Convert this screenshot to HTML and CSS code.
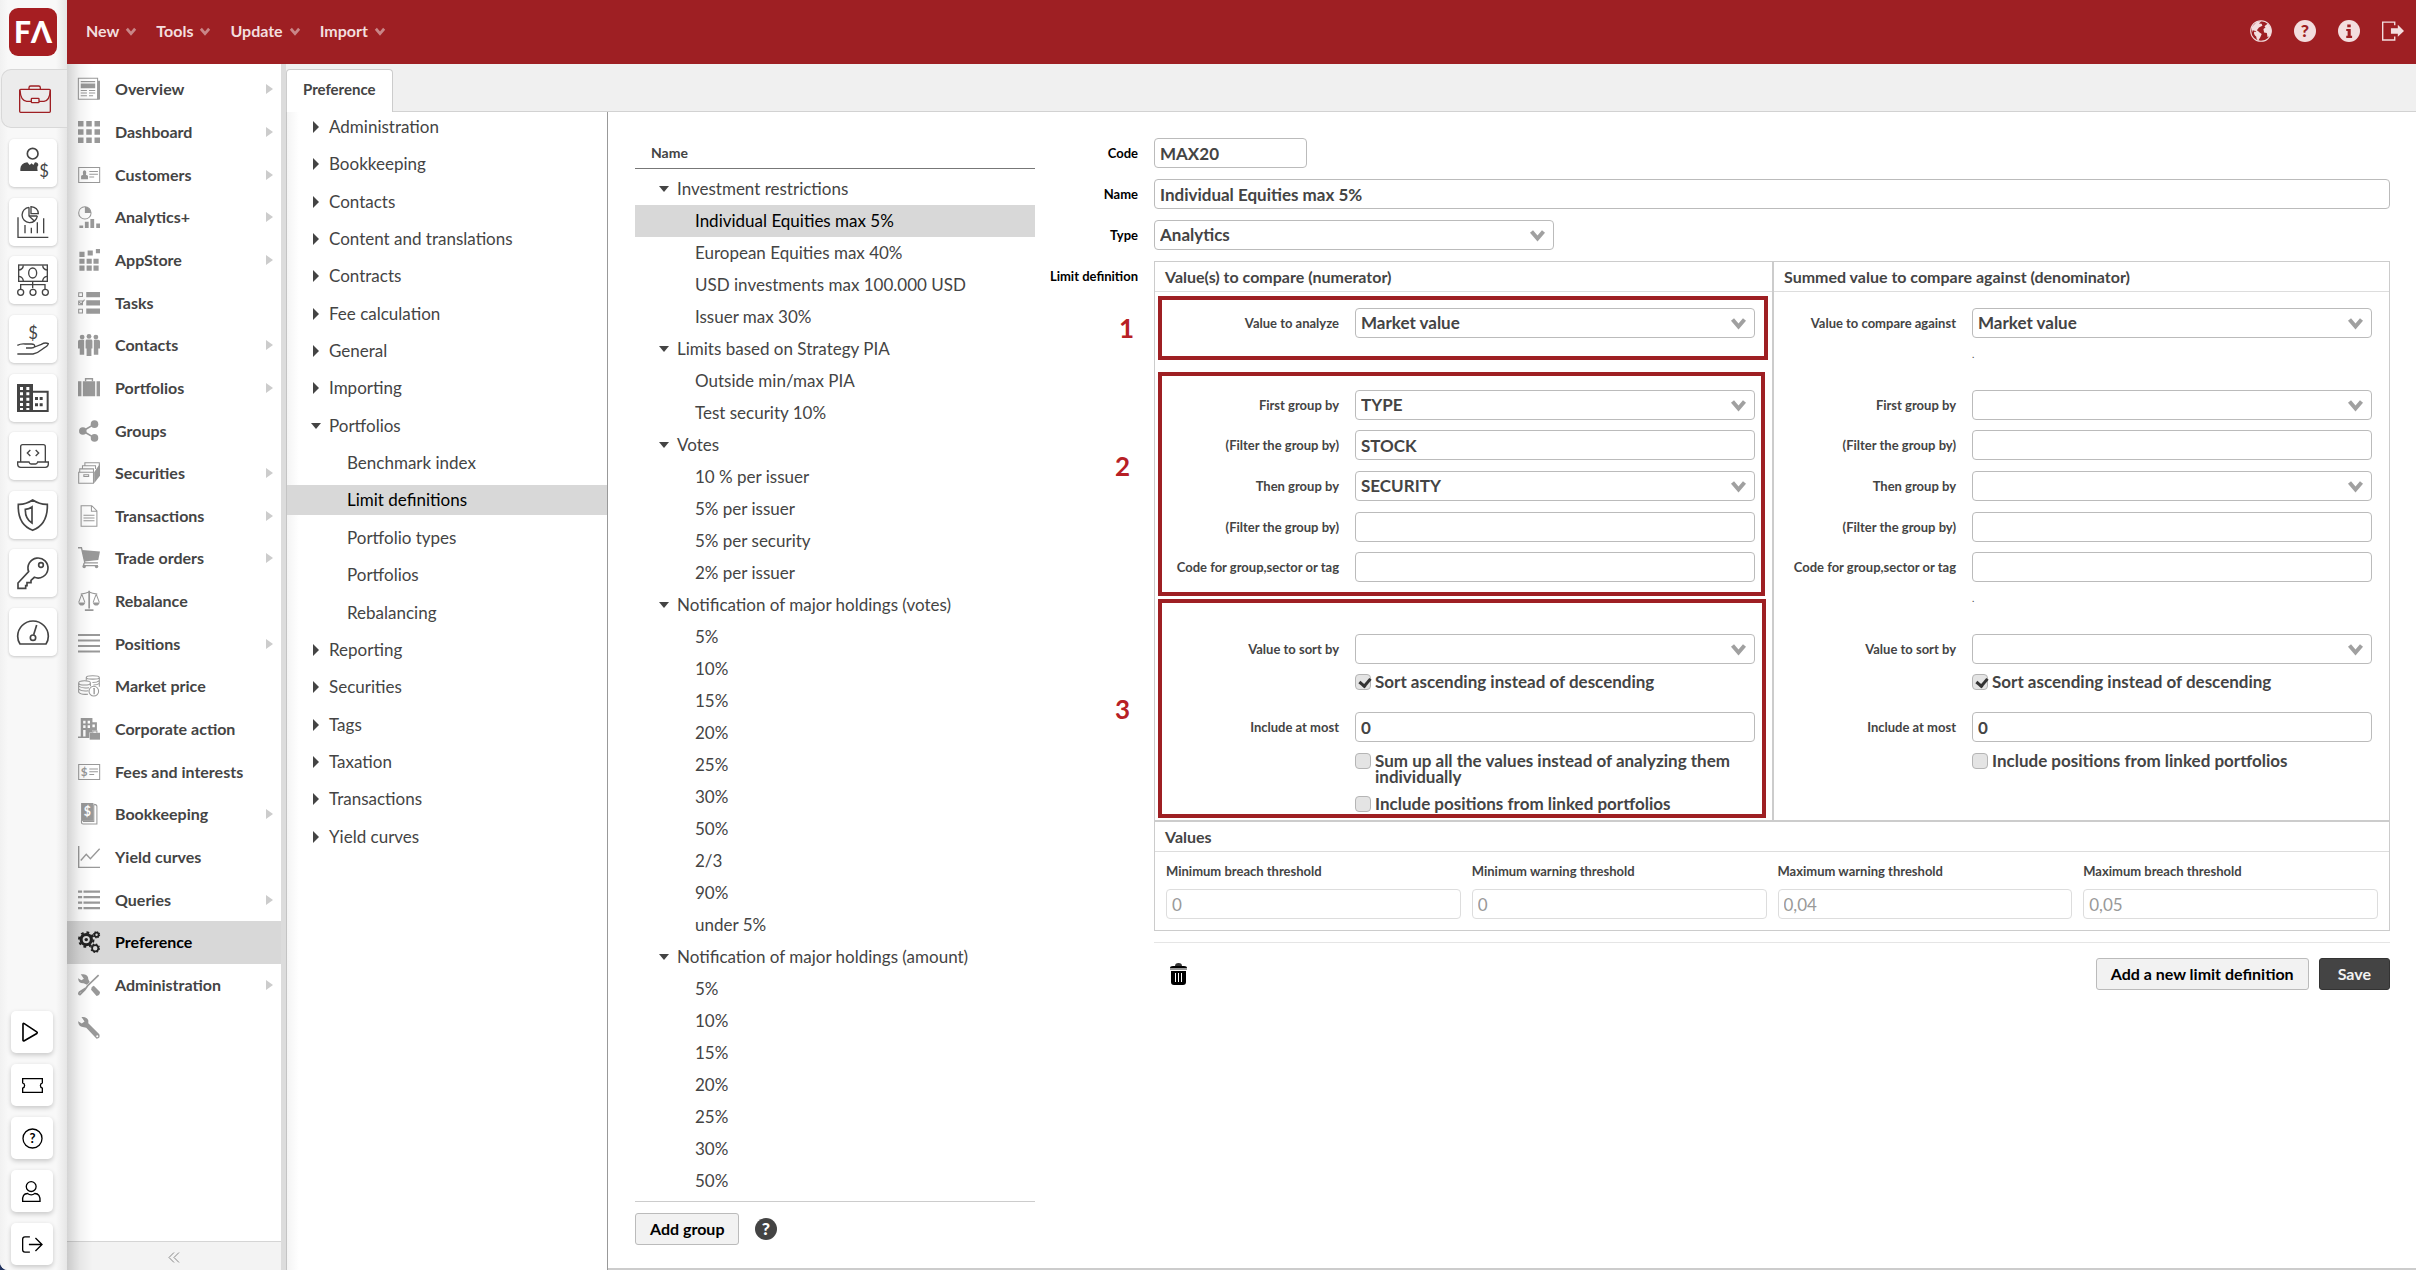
FILE: index.html
```html
<!DOCTYPE html>
<html lang="en">
<head>
<meta charset="utf-8">
<title>Preference - Limit definitions</title>
<link rel="stylesheet" href="styles.css">
</head>
<body>
<svg class="sprite" aria-hidden="true">
  <symbol id="chevron" viewBox="0 0 16 13"><path d="M2 2.500L8 9.500 14 2.500" fill="none" stroke="currentColor" stroke-width="4"/></symbol>
  <symbol id="question" viewBox="0 0 64 64"><circle cx="32" cy="32" r="32" fill="currentColor"/><text class="q-mark" x="32" y="50" text-anchor="middle">?</text></symbol>
</svg>
<div class="app">
  <aside class="rail">
    <a class="logo" href="#" aria-label="Home"><svg viewBox="0 0 48 48"><text x="24" y="35" text-anchor="middle" class="logo-text">FΛ</text></svg></a>
    <a class="rail-current" href="#" aria-label="Back office"><svg viewBox="0 0 96 96"><g fill="none" stroke="#9e1f23" stroke-width="4"><rect x="2" y="19" width="92" height="69" rx="3"/><path d="M30 18v-4q0-5 5-5h24q5 0 5 5v4M3 22q2 32 20 33h15M60 55h15q17-2 19-33"/><rect x="37" y="46" width="23" height="13" rx="2"/></g></svg></a>
    <nav class="rail-apps" aria-label="Applications">
      <a href="#" aria-label="Customers"><svg viewBox="0 0 96 96"><circle cx="47" cy="20" r="16" fill="none" stroke="#444" stroke-width="5"/><path d="M10 72v-6q0-17 21-20l7 8 6-5 5 5 5-8q10 0 10 9-5 4-2 17z" fill="#444"/><text class="dollar-lg" x="81" y="90" text-anchor="middle">$</text></svg></a>
      <a href="#" aria-label="Analytics"><svg viewBox="0 0 96 96"><g fill="none" stroke="#444" stroke-width="4"><path d="M3 34v60h91M24 57v25M43 65v17M61 49v33M80 37v45"/><path d="M36 4a23 23 0 1 0 25 26M36 4v26l16 15"/><path d="M42 2v21h22q-1-19-22-21zM36 30h25"/></g></svg></a>
      <a href="#" aria-label="Payments"><svg viewBox="0 0 96 96"><g fill="none" stroke="#444" stroke-width="4"><rect x="5" y="3" width="86" height="49"/><ellipse cx="47" cy="27" rx="12" ry="15"/><path d="M6 18q12-2 13-14M77 4q1 12 13 14M6 37q12 2 13 14M77 51q1-12 13-14M47 53v20M11 75V62h73v13"/><circle cx="11" cy="85" r="9"/><circle cx="48" cy="85" r="9"/><circle cx="85" cy="85" r="9"/></g></svg></a>
      <a href="#" aria-label="Fees"><svg viewBox="0 0 96 96"><text class="dollar-lg" x="48" y="48" text-anchor="middle">$</text><path d="M1 67q12-6 24-4h18q12 0 10 8-2 4-10 4H27M53 72l20-8q12-7 21-2-1 7-16 15-16 13-30 16H1" fill="none" stroke="#444" stroke-width="4"/></svg></a>
      <a href="#" aria-label="Companies"><svg viewBox="0 0 96 96"><path d="M0 6h48v84H0z" fill="#444"/><path d="M48 29h44v58H48" fill="none" stroke="#444" stroke-width="6"/><path d="M9 15h9v9H9zM28 15h9v9h-9zM9 31h9v9H9zM28 31h9v9h-9zM9 47h9v9H9zM28 47h9v9h-9zM9 63h9v9H9zM28 63h9v9h-9zM9 78h9v6H9zM28 78h9v6h-9z" fill="#fff"/><path d="M54 45h9v9h-9zM68 45h9v9h-9zM54 64h9v9h-9zM68 64h9v9h-9z" fill="#444"/></svg></a>
      <a href="#" aria-label="Developer"><svg viewBox="0 0 96 96"><g fill="none" stroke="#444" stroke-width="4"><path d="M11 64V20q0-6 6-6h62q6 0 6 6v44M2 66h34q2 6 6 6h14q4 0 6-6h32v7q0 9-9 9H11q-9 0-9-9z"/><path d="M40 30l-9 9 9 9M56 30l9 9-9 9"/></g></svg></a>
      <a href="#" aria-label="Compliance"><svg viewBox="0 0 96 96"><g fill="none" stroke="#444" stroke-width="5"><path d="M47 3q22 14 44 13 2 60-44 78Q1 76 4 16q22 1 43-13z"/><path d="M45 24q-8 6-20 7-1 28 20 41z"/></g></svg></a>
      <a href="#" aria-label="Access"><svg viewBox="0 0 96 96"><g fill="none" stroke="#444" stroke-width="5"><path d="M35 44A30 30 0 1 1 52 61l-10 9v7H30v9h-4v8H3V78z"/><circle cx="72" cy="24" r="7"/></g></svg></a>
      <a href="#" aria-label="Monitoring"><svg viewBox="0 0 96 96"><g fill="none" stroke="#444" stroke-width="5"><path d="M9 84Q2 74 2 61a45 45 0 0 1 92 0q0 13-7 23z"/><path d="M50 56l9-29"/><circle cx="48" cy="65" r="8"/></g></svg></a>
    </nav>
    <div class="rail-tools">
      <a href="#" aria-label="Run"><svg viewBox="0 0 64 64"><path d="M3 7v48q0 4 4 2l38-22q3-3 0-5L7 5Q3 3 3 7z" fill="none" stroke="#000" stroke-width="5"/></svg></a>
      <a href="#" aria-label="Tickets"><svg viewBox="0 0 64 64"><path d="M2 11h60v13q-6 2-6 8t6 8v13H2V40q6-2 6-8t-6-8z" fill="none" stroke="#000" stroke-width="4"/></svg></a>
      <a href="#" aria-label="Help"><svg viewBox="0 0 64 64"><circle cx="32" cy="32" r="29" fill="none" stroke="#000" stroke-width="4"/><text class="q-line" x="32" y="46" text-anchor="middle">?</text></svg></a>
      <a href="#" aria-label="Profile"><svg viewBox="0 0 64 64"><g fill="none" stroke="#000" stroke-width="4"><circle cx="28" cy="17" r="15"/><path d="M2 62Q0 38 17 38q5 4 11 4t11-4q17 0 16 24z"/></g></svg></a>
      <a href="#" aria-label="Sign out"><svg viewBox="0 0 64 64"><path d="M24 9H9q-7 0-7 7v32q0 7 7 7h15M21 32h39M41 12l20 20-20 20" fill="none" stroke="#000" stroke-width="4"/></svg></a>
    </div>
  </aside>
  <div class="workspace">
    <header class="topbar">
      <div class="menus">
        <button type="button">New<svg><use href="#chevron"/></svg></button>
        <button type="button">Tools<svg><use href="#chevron"/></svg></button>
        <button type="button">Update<svg><use href="#chevron"/></svg></button>
        <button type="button">Import<svg><use href="#chevron"/></svg></button>
      </div>
      <div class="top-icons">
        <a href="#" aria-label="Language"><svg viewBox="0 0 64 64"><circle cx="32" cy="32" r="30" fill="none" stroke="currentColor" stroke-width="3"/><path d="M5 20L20 5l14-2-8 7 8 1 2 6-10 5-6 8 6 4-4 3-6-5-8-2-2 6zM12 34l14 1 8 6-4 9-6 10q-6-4-6-12-8-6-6-14zM42 18l10-8 8 12 3 10-4 14-8 4-2-12-8-2-2-10 6-4z" fill="currentColor"/></svg></a>
        <a href="#" aria-label="Help"><svg viewBox="0 0 64 64"><use href="#question"/></svg></a>
        <a href="#" aria-label="Information"><svg viewBox="0 0 64 64"><circle cx="32" cy="32" r="32" fill="currentColor"/><path d="M27 13h10v8H27zM24 26h13v20h4v6H24v-6h4V32h-4z" fill="#9e1f23"/></svg></a>
        <a href="#" aria-label="Sign out"><svg viewBox="0 0 64 64"><path d="M37 15V6H2v52h35V48" fill="none" stroke="currentColor" stroke-width="4"/><path d="M26 24h20V14l18 18-18 17V40H26z" fill="currentColor"/></svg></a>
      </div>
    </header>
    <div class="body">
      <div class="sidebar">
        <nav class="modules" aria-label="Modules">
          <a class="sub" href="#"><svg viewBox="0 0 64 64"><path d="M1 1h56v61H1z" fill="none" stroke="currentColor" stroke-width="3"/><path d="M57 8h7v54q-4 3-8 0zM8 9h42v3H8zM8 16h42v14H8zM8 35h18v3H8zM32 35h18v3H32zM8 42h18v3H8zM32 42h18v3H32zM8 50h18v3H8zM32 50h12v3H32z" fill="currentColor"/></svg>Overview</a>
          <a class="sub" href="#"><svg viewBox="0 0 64 64"><path d="M0 0h16v16H0zM24 0h16v16H24zM48 0h16v16H48zM0 24h16v16H0zM24 24h16v16H24zM48 24h16v16H48zM0 48h16v16H0zM24 48h16v16H24zM48 48h16v16H48z" fill="currentColor"/></svg>Dashboard</a>
          <a class="sub" href="#"><svg viewBox="0 0 64 64"><path d="M2 10h61v44H2z" fill="none" stroke="currentColor" stroke-width="3"/><path d="M9 44V34l6-3q-3-12 4-13 7 1 4 13l6 3v10zM33 20h25v3H33zM33 28h25v3H33zM33 36h14v3H33z" fill="currentColor"/></svg>Customers</a>
          <a class="sub" href="#"><svg viewBox="0 0 64 64"><circle cx="20" cy="20" r="18" fill="none" stroke="currentColor" stroke-width="3"/><path d="M20 20V2a18 18 0 0 1 18 18zM4 57h11v7H4zM20 46h11v18H20zM36 38h11v26H36zM53 51h11v13H53z" fill="currentColor"/></svg>Analytics+</a>
          <a class="sub" href="#"><svg viewBox="0 0 64 64"><path d="M4 8h15v15H4zM28 4h15v15H28zM52 0h12v12H52zM4 28h15v15H4zM25 28h15v15H25zM45 28h15v15H45zM4 48h15v15H4zM25 48h15v15H25zM45 48h15v15H45z" fill="currentColor"/></svg>AppStore</a>
          <a href="#"><svg viewBox="0 0 64 64"><path d="M24 0h40v15H24zM24 24h40v15H24zM24 48h40v15H24z" fill="currentColor"/><path d="M2 2h11v11H2zM2 26h11v11H2zM2 50h11v11H2zM4 29l5 6L19 22" fill="none" stroke="currentColor" stroke-width="3"/></svg>Tasks</a>
          <a class="sub" href="#"><svg viewBox="0 0 64 64"><g fill="currentColor"><circle cx="12" cy="9" r="7"/><circle cx="32" cy="7" r="7"/><circle cx="52" cy="9" r="7"/><path d="M0 22q0-5 5-5h13v43H5V42H0zM22 20q0-4 4-4h12q4 0 4 4v22h-3v22H25V42h-3zM46 17h13q5 0 5 5v20h-5v18H46z"/></g></svg>Contacts</a>
          <a class="sub" href="#"><svg viewBox="0 0 64 64"><path d="M0 12h10v44H0zM14 12h36v44H14zM54 12h10v44H54z" fill="currentColor"/><path d="M22 12V5h20v7" fill="none" stroke="currentColor" stroke-width="4"/></svg>Portfolios</a>
          <a href="#"><svg viewBox="0 0 64 64"><g fill="currentColor"><circle cx="14" cy="32" r="11"/><circle cx="48" cy="12" r="11"/><circle cx="48" cy="52" r="11"/></g><path d="M48 12L14 32l34 20" fill="none" stroke="currentColor" stroke-width="5"/></svg>Groups</a>
          <a class="sub" href="#"><svg viewBox="0 0 64 64"><g fill="none" stroke="currentColor" stroke-width="3"><path d="M2 30h43v32H2zM5 29v-9h40v9M13 19v-8h38v9M20 10V2h42v8M17 37h14v5H17z"/></g><path d="M47 30L64 4v36L47 62z" fill="currentColor"/></svg>Securities</a>
          <a class="sub" href="#"><svg viewBox="0 0 64 64"><path d="M9 2h31l15 15v45H9zM39 2v16h16M16 30h32M16 38h32M16 46h32" fill="none" stroke="currentColor" stroke-width="3"/></svg>Transactions</a>
          <a class="sub" href="#"><svg viewBox="0 0 64 64"><path d="M0 2h10l10 44h38M18 46l-2 8h42" fill="none" stroke="currentColor" stroke-width="4"/><path d="M12 9l52 4-5 25-40 4z" fill="currentColor"/><circle cx="18" cy="57" r="5" fill="currentColor"/><circle cx="54" cy="57" r="5" fill="currentColor"/></svg>Trade orders</a>
          <a href="#"><svg viewBox="0 0 64 64"><path d="M30 2h5v52h-5zM20 56h25v5H20zM1 36h20q-2 9-10 9T1 36zM43 36h20q-2 9-10 9t-10-9z" fill="currentColor"/><path d="M8 12q14-2 24-6 10 4 24 6M11 12L2 36M11 12l9 24M53 12l-9 24M53 12l9 24" fill="none" stroke="currentColor" stroke-width="3"/></svg>Rebalance</a>
          <a class="sub" href="#"><svg viewBox="0 0 64 64"><path d="M0 3h64v6H0zM0 19h64v6H0zM0 35h64v6H0zM0 51h64v6H0z" fill="currentColor"/></svg>Positions</a>
          <a href="#"><svg viewBox="0 0 64 64"><g fill="none" stroke="currentColor" stroke-width="3"><ellipse cx="43" cy="7" rx="19" ry="5"/><path d="M24 8v8M62 8v26M42 22q14 0 20-6M45 29q12 0 17-5"/><ellipse cx="19" cy="23" rx="17" ry="6"/><path d="M2 24v26q6 8 27 6M2 32q8 8 30 5M2 41q10 8 28 5M36 24v9"/><circle cx="46" cy="47" r="14"/></g><path d="M44 38h5v18h-4V42z" fill="currentColor"/></svg>Market price</a>
          <a href="#"><svg viewBox="0 0 64 64"><path fill-rule="evenodd" d="M8 0h34v12h13v24H41v6h-8v16H0v-4h8zM15 8v8h7V8zM28 8v8h7V8zM15 21v8h7v-8zM28 21v8h7v-8zM42 19v8h7v-8zM15 35v19h7V35z" fill="currentColor"/><path d="M34 43h30v20H34z" fill="currentColor"/><path d="M43 43v-5h12v5" fill="none" stroke="currentColor" stroke-width="3"/></svg>Corporate action</a>
          <a href="#"><svg viewBox="0 0 64 64"><path d="M2 10h61v44H2zM33 23h25M33 31h25M33 39h14" fill="none" stroke="currentColor" stroke-width="3"/><text class="dollar-sm" x="18" y="44" text-anchor="middle">$</text></svg>Fees and interests</a>
          <a class="sub" href="#"><svg viewBox="0 0 64 64"><path d="M9 0h36v52H9z" fill="currentColor"/><path d="M10 50v6q0 5 5 5h40V10q0-6-8-6M46 4v50H14" fill="none" stroke="currentColor" stroke-width="3"/><text class="dollar-inv" x="27" y="37" text-anchor="middle">$</text></svg>Bookkeeping</a>
          <a href="#"><svg viewBox="0 0 64 64"><path d="M2 0v62h62M8 42l16-18 12 13L63 8" fill="none" stroke="currentColor" stroke-width="4"/></svg>Yield curves</a>
          <a class="sub" href="#"><svg viewBox="0 0 64 64"><path d="M0 4h12v7H0zM16 4h48v7H16zM0 20h12v7H0zM16 20h48v7H16zM0 36h12v7H0zM16 36h48v7H16zM0 52h12v7H0zM16 52h48v7H16z" fill="currentColor"/></svg>Queries</a>
          <a class="current" href="#" aria-current="page"><svg viewBox="0 0 64 64"><g fill="none" stroke="currentColor"><circle cx="24" cy="25" r="15" stroke-width="9"/><circle cx="24" cy="25" r="21" stroke-width="6" stroke-dasharray="8 8.500"/><circle cx="54" cy="11" r="6" stroke-width="5"/><circle cx="54" cy="11" r="9" stroke-width="3" stroke-dasharray="4 3"/><circle cx="50" cy="50" r="9" stroke-width="5"/><circle cx="50" cy="50" r="12" stroke-width="4" stroke-dasharray="4.500 5"/></g><circle cx="24" cy="25" r="5" fill="currentColor"/></svg>Preference</a>
          <a class="sub" href="#"><svg viewBox="0 0 64 64"><path d="M8 1h8q14 2 14 14l4 8-8 8-10-4Q2 28 0 12l10 6 7-4zM40 38l6-4 18 18q0 10-10 12L38 46z" fill="currentColor"/><path d="M60 3L28 34 20 46 6 60q-6-2-2-7l18-12" fill="none" stroke="currentColor" stroke-width="5"/></svg>Administration</a>
          <a href="#" aria-label="Tools"><svg viewBox="0 0 64 64"><path d="M10 0q16-2 20 10v8l32 32q4 12-8 13L24 31l-10-2Q2 28 0 12l11 7 8-6z" fill="currentColor"/><circle cx="56" cy="56" r="3" fill="#fff"/></svg></a>
        </nav>
        <button class="collapse" type="button" aria-label="Collapse menu"><svg viewBox="0 0 36 32"><path d="M18 1L3 16l15 15M33 1L18 16l15 15" fill="none" stroke="#888" stroke-width="3"/></svg></button>
      </div>
      <div class="content">
        <div class="tabs"><a class="tab" href="#">Preference</a></div>
        <div class="panes">
          <nav class="tree" aria-label="Preferences">
            <div class="tree-items">
              <a class="closed" href="#">Administration</a>
              <a class="closed" href="#">Bookkeeping</a>
              <a class="closed" href="#">Contacts</a>
              <a class="closed" href="#">Content and translations</a>
              <a class="closed" href="#">Contracts</a>
              <a class="closed" href="#">Fee calculation</a>
              <a class="closed" href="#">General</a>
              <a class="closed" href="#">Importing</a>
              <a class="open" href="#">Portfolios</a>
              <a class="leaf" href="#">Benchmark index</a>
              <a class="leaf current" href="#">Limit definitions</a>
              <a class="leaf" href="#">Portfolio types</a>
              <a class="leaf" href="#">Portfolios</a>
              <a class="leaf" href="#">Rebalancing</a>
              <a class="closed" href="#">Reporting</a>
              <a class="closed" href="#">Securities</a>
              <a class="closed" href="#">Tags</a>
              <a class="closed" href="#">Taxation</a>
              <a class="closed" href="#">Transactions</a>
              <a class="closed" href="#">Yield curves</a>
            </div>
          </nav>
          <main class="detail">
            <section class="limits">
              <table>
                <thead><tr><th>Name</th></tr></thead>
                <tbody>
                  <tr class="group"><td>Investment restrictions</td></tr>
                  <tr class="current"><td>Individual Equities max 5%</td></tr>
                  <tr><td>European Equities max 40%</td></tr>
                  <tr><td>USD investments max 100.000 USD</td></tr>
                  <tr><td>Issuer max 30%</td></tr>
                  <tr class="group"><td>Limits based on Strategy PIA</td></tr>
                  <tr><td>Outside min/max PIA</td></tr>
                  <tr><td>Test security 10%</td></tr>
                  <tr class="group"><td>Votes</td></tr>
                  <tr><td>10 % per issuer</td></tr>
                  <tr><td>5% per issuer</td></tr>
                  <tr><td>5% per security</td></tr>
                  <tr><td>2% per issuer</td></tr>
                  <tr class="group"><td>Notification of major holdings (votes)</td></tr>
                  <tr><td>5%</td></tr>
                  <tr><td>10%</td></tr>
                  <tr><td>15%</td></tr>
                  <tr><td>20%</td></tr>
                  <tr><td>25%</td></tr>
                  <tr><td>30%</td></tr>
                  <tr><td>50%</td></tr>
                  <tr><td>2/3</td></tr>
                  <tr><td>90%</td></tr>
                  <tr><td>under 5%</td></tr>
                  <tr class="group"><td>Notification of major holdings (amount)</td></tr>
                  <tr><td>5%</td></tr>
                  <tr><td>10%</td></tr>
                  <tr><td>15%</td></tr>
                  <tr><td>20%</td></tr>
                  <tr><td>25%</td></tr>
                  <tr><td>30%</td></tr>
                  <tr><td>50%</td></tr>
                </tbody>
              </table>
              <div class="list-actions">
                <button class="btn" type="button">Add group</button>
                <a class="list-help" href="#" aria-label="Help"><svg viewBox="0 0 64 64"><use href="#question"/></svg></a>
              </div>
            </section>
            <form class="editor">
              <label for="code">Code</label>
              <input class="field short" id="code" type="text" value="MAX20">
              <label for="name">Name</label>
              <input class="field" id="name" type="text" value="Individual Equities max 5%">
              <label for="type">Type</label>
              <span class="select medium"><select class="field" id="type"><option>Analytics</option></select><svg><use href="#chevron"/></svg></span>
              <span class="caption">Limit definition</span>
              <div class="definition">
                <div class="sides">
                  <section class="side">
                    <h2>Value(s) to compare (numerator)</h2>
                    <div class="rows">
                      <label for="n-value">Value to analyze</label><span class="select"><select class="field" id="n-value"><option>Market value</option></select><svg><use href="#chevron"/></svg></span>
                      <span></span><span class="dot">.</span>
                      <label for="n-first">First group by</label><span class="select"><select class="field" id="n-first"><option>TYPE</option></select><svg><use href="#chevron"/></svg></span>
                      <label for="n-filter1">(Filter the group by)</label><input class="field" id="n-filter1" type="text" value="STOCK">
                      <label for="n-then">Then group by</label><span class="select"><select class="field" id="n-then"><option>SECURITY</option></select><svg><use href="#chevron"/></svg></span>
                      <label for="n-filter2">(Filter the group by)</label><input class="field" id="n-filter2" type="text">
                      <label for="n-code">Code for group,sector or tag</label><input class="field" id="n-code" type="text">
                      <span></span><span class="dot">.</span>
                      <label for="n-sort">Value to sort by</label><span class="select"><select class="field" id="n-sort"><option></option></select><svg><use href="#chevron"/></svg></span>
                    </div>
                    <div class="limit-rows">
                      <label class="check"><input type="checkbox" checked>Sort ascending instead of descending</label>
                      <label for="n-most">Include at most</label><input class="field" id="n-most" type="text" value="0">
                      <label class="check"><input type="checkbox">Sum up all the values instead of analyzing them individually</label>
                      <label class="check"><input type="checkbox">Include positions from linked portfolios</label>
                    </div>
                  </section>
                  <section class="side">
                    <h2>Summed value to compare against (denominator)</h2>
                    <div class="rows">
                      <label for="d-value">Value to compare against</label><span class="select"><select class="field" id="d-value"><option>Market value</option></select><svg><use href="#chevron"/></svg></span>
                      <span></span><span class="dot">.</span>
                      <label for="d-first">First group by</label><span class="select"><select class="field" id="d-first"><option></option></select><svg><use href="#chevron"/></svg></span>
                      <label for="d-filter1">(Filter the group by)</label><input class="field" id="d-filter1" type="text">
                      <label for="d-then">Then group by</label><span class="select"><select class="field" id="d-then"><option></option></select><svg><use href="#chevron"/></svg></span>
                      <label for="d-filter2">(Filter the group by)</label><input class="field" id="d-filter2" type="text">
                      <label for="d-code">Code for group,sector or tag</label><input class="field" id="d-code" type="text">
                      <span></span><span class="dot">.</span>
                      <label for="d-sort">Value to sort by</label><span class="select"><select class="field" id="d-sort"><option></option></select><svg><use href="#chevron"/></svg></span>
                    </div>
                    <div class="limit-rows">
                      <label class="check"><input type="checkbox" checked>Sort ascending instead of descending</label>
                      <label for="d-most">Include at most</label><input class="field" id="d-most" type="text" value="0">
                      <label class="check"><input type="checkbox">Include positions from linked portfolios</label>
                    </div>
                  </section>
                </div>
                <section class="values">
                  <h2>Values</h2>
                  <div class="thresholds">
                    <label>Minimum breach threshold<input class="field" type="text" value="0" disabled></label>
                    <label>Minimum warning threshold<input class="field" type="text" value="0" disabled></label>
                    <label>Maximum warning threshold<input class="field" type="text" value="0,04" disabled></label>
                    <label>Maximum breach threshold<input class="field" type="text" value="0,05" disabled></label>
                  </div>
                </section>
                <div class="mark mark-1"><b>1</b></div>
                <div class="mark mark-2"><b>2</b></div>
                <div class="mark mark-3"><b>3</b></div>
              </div>
              <div class="form-actions">
                <button class="trash" type="button" aria-label="Delete"><svg viewBox="0 0 17 22"><path d="M5 3q0-3 3.500-3T12 3v1H5z" fill="#333"/><path d="M0 5q0-2 3-2h11q3 0 3 2zM1 8h15v11q0 3-3 3H4q-3 0-3-3z" fill="#000"/><path d="M0 5h17v2H0z" fill="#999"/><path d="M5 10h1v9H5zM8 10h1v9H8zM11 10h1v9h-1z" fill="#fff"/></svg></button>
                <button class="btn" type="button">Add a new limit definition</button>
                <button class="btn save" type="button">Save</button>
              </div>
            </form>
          </main>
        </div>
      </div>
    </div>
  </div>
</div>
</body>
</html>
```
FILE: styles.css
```css
* { box-sizing: border-box; }
html, body { height: 100%; }
body {
  margin: 0;
  background: #22335f;
  color: #444;
  font: 400 17px/20px Lato, sans-serif;
}
a { color: inherit; text-decoration: none; }
button, input, select { font: inherit; color: inherit; }
svg { display: block; flex: none; overflow: visible; }
.sprite { position: absolute; width: 0; height: 0; }
.app {
  display: flex;
  height: 100vh;
  overflow: hidden;
  background: #fff;
  border-bottom-left-radius: 8px;
}

/* Icon rail */
.rail {
  display: flex;
  flex-direction: column;
  width: 67px;
  flex: none;
  padding: 8px 0 5px;
  background: linear-gradient(90deg, #f1f1f1, #f8f8f8 8px, #f8f8f8 56px, #e6e6e6);
}
.logo {
  width: 48px;
  height: 48px;
  margin-left: 9px;
  border-radius: 9px;
  background: #a61e22;
}
.logo-text { font: 900 30px Lato, sans-serif; fill: #fff; }
.rail-current {
  display: flex;
  align-items: center;
  justify-content: center;
  height: 59px;
  margin: 13px 0 11px 1px;
  border: 1px solid #d8d8d8;
  border-right: 0;
  border-radius: 10px 0 0 10px;
  background: #ececec;
}
.rail svg { width: 32px; height: 32px; }
.rail .logo svg { width: 48px; height: 48px; }
.rail-apps {
  display: flex;
  flex-direction: column;
  justify-content: space-between;
  height: 517px;
  margin-left: 9px;
}
.rail-apps a, .rail-tools a {
  display: flex;
  align-items: center;
  justify-content: center;
  background: #fff;
  border-radius: 5px;
  box-shadow: 0 1px 3px rgba(0, 0, 0, .2);
}
.rail-apps a { width: 48px; height: 48px; }
.rail-tools {
  display: flex;
  flex-direction: column;
  gap: 11px;
  margin: auto 0 0 11px;
}
.rail-tools a { width: 42px; height: 42px; box-shadow: 0 2px 5px rgba(0, 0, 0, .2); }
.rail .rail-tools svg { width: 21px; height: 21px; }
.dollar-lg { font: 400 50px Lato, sans-serif; fill: #444; }
.dollar-sm { font: 700 34px Lato, sans-serif; fill: currentColor; }
.dollar-inv { font: 700 36px Lato, sans-serif; fill: #fff; }
.q-mark { font: 900 52px Lato, sans-serif; fill: var(--mark, #fff); }
.q-line { font: 700 40px Lato, sans-serif; fill: #000; }

/* Top bar */
.workspace { display: flex; flex-direction: column; flex: 1; min-width: 0; }
.topbar {
  display: flex;
  align-items: center;
  justify-content: space-between;
  flex: none;
  height: 64px;
  padding: 0 12px 2px 19px;
  background: #9e1f23;
  color: #f3dedf;
}
.menus { display: flex; gap: 19px; }
.menus button {
  display: flex;
  align-items: center;
  gap: 6px;
  padding: 0;
  border: 0;
  background: none;
  font-size: 16px;
  font-weight: 700;
}
.menus svg { width: 12px; height: 9px; color: #c98688; }
.top-icons { --mark: #9e1f23; display: flex; gap: 22px; }
.top-icons svg { width: 22px; height: 22px; }

/* Module menu */
.body { display: flex; flex: 1; min-height: 0; }
.sidebar {
  position: relative;
  display: flex;
  flex-direction: column;
  flex: none;
  width: 219px;
  border-right: 5px solid #dcdcdc;
}
.sidebar::before {
  content: "";
  position: absolute;
  inset: 0 auto 0 0;
  width: 26px;
  background: linear-gradient(90deg, rgba(0, 0, 0, .17), rgba(0, 0, 0, .05) 50%, transparent);
  pointer-events: none;
}
.modules {
  display: grid;
  grid-template-rows: repeat(23, 1fr);
  height: 981px;
  margin-top: 4px;
  font-size: 16px;
  font-weight: 700;
}
.modules a {
  display: flex;
  align-items: center;
  gap: 15px;
  padding: 0 8px 0 11px;
}
.modules svg { width: 22px; height: 22px; color: #999; }
.modules .sub::after {
  content: "";
  margin-left: auto;
  border: 5px solid transparent;
  border-left: 7px solid #ccc;
  border-right: 0;
}
.modules .current { background: #d8d8d8; color: #000; }
.modules .current svg { color: #222; }
.collapse {
  display: flex;
  align-items: center;
  justify-content: center;
  height: 29px;
  margin-top: auto;
  padding: 3px 0 0;
  border: 0;
  border-top: 1px solid #d5d5d5;
  background: #f3f3f3;
}
.collapse svg { width: 12px; height: 11px; }

/* Tabs and preference tree */
.content { display: flex; flex-direction: column; flex: 1; min-width: 0; }
.tabs {
  display: flex;
  flex: none;
  height: 48px;
  padding-top: 5px;
  background: #f0f0f0;
  box-shadow: inset 0 -1px #d2d2d2;
}
.tab {
  padding: 9px 16px 0;
  border: 1px solid #ccc;
  border-bottom: 0;
  border-radius: 4px 4px 0 0;
  background: #fff;
  font-size: 15px;
  font-weight: 700;
}
.panes { display: flex; flex: 1; min-height: 0; }
.tree {
  flex: none;
  width: 322px;
  border-left: 1px solid #c4c4c4;
  border-right: 1px solid #999;
  background: linear-gradient(90deg, #f4f4f4, #fff 12px);
}
.tree-items {
  display: grid;
  grid-template-rows: repeat(20, 1fr);
  align-items: start;
  height: 747px;
}
.tree a { display: flex; align-items: center; height: 30px; padding-left: 42px; }
.tree .leaf { padding-left: 60px; }
.tree .current { background: #d8d8d8; color: #000; }
.closed::before {
  content: "";
  margin: 0 10px 0 -16px;
  border: 6px solid transparent;
  border-left-color: #444;
  border-right: 0;
}
.open::before, .group td::before {
  content: "";
  display: inline-block;
  border: 5px solid transparent;
  border-top: 6px solid #444;
  border-bottom: 0;
}
.open::before { margin: 0 8px 0 -18px; }

/* Limit list */
.detail {
  display: flex;
  flex: 1;
  min-width: 0;
  padding: 26px 26px 0 27px;
  border-bottom: 2px solid #ccc;
}
.limits { flex: none; width: 400px; }
.limits table { width: 100%; margin-bottom: 4px; border-spacing: 0; }
.limits th {
  height: 31px;
  padding: 0 16px;
  border-bottom: 1px solid #777;
  text-align: left;
  font-size: 14px;
  font-weight: 700;
}
.limits td { height: 32px; padding: 0 0 0 60px; }
.limits .group td { padding-left: 24px; }
.limits .group:first-child td { height: 36px; padding-top: 4px; }
.group td::before { margin-right: 8px; vertical-align: 3px; }
.limits .current { background: #d8d8d8; color: #000; }
.list-actions {
  display: flex;
  align-items: center;
  gap: 16px;
  padding-top: 11px;
  border-top: 1px solid #ccc;
}
.list-help { color: #444; }
.list-help svg { width: 22px; height: 22px; }
.btn {
  height: 32px;
  padding: 0 14px;
  border: 1px solid #bbb;
  border-radius: 3px;
  background: #f2f2f2;
  color: #000;
  font-size: 16px;
  font-weight: 700;
}
.save { padding: 0 18px; background: #444; border-color: #333; color: #f2f2f2; }

/* Editor form */
.editor {
  display: grid;
  grid-template-columns: 103px minmax(0, 1fr);
  grid-auto-rows: max-content;
  gap: 11px 16px;
  flex: 1;
  min-width: 0;
  align-content: start;
}
.editor label, .caption { font-size: 13px; font-weight: 700; }
.editor > label, .caption { color: #000; line-height: 30px; text-align: right; white-space: nowrap; }
.field {
  width: 100%;
  height: 30px;
  padding: 0 5px;
  border: 1px solid #bbb;
  border-radius: 4px;
  background: #fff;
  color: #444;
  font-size: 17px;
  font-weight: 700;
}
.short { width: 153px; }
.select { position: relative; display: block; }
.medium { width: 400px; }
.select select { appearance: none; display: block; }
.select svg {
  position: absolute;
  top: 9px;
  right: 8px;
  width: 17px;
  height: 13px;
  color: #a0a0a0;
  pointer-events: none;
}
.definition { position: relative; border: 1px solid #ccc; }
.definition h2 {
  margin: 0;
  padding: 0 10px;
  border-bottom: 1px solid #ddd;
  font-size: 16px;
  font-weight: 700;
  line-height: 29px;
}
.sides { display: grid; grid-template-columns: 1fr 1fr; border-bottom: 2px solid #ccc; }
.side + .side { border-left: 2px solid #ccc; }
.rows, .limit-rows {
  display: grid;
  grid-template-columns: minmax(0, 1fr) 400px;
  column-gap: 16px;
  align-items: center;
  padding-right: 17px;
}
.rows { grid-template-rows: repeat(9, 1fr); height: 366px; margin-top: 11px; }
.rows > label, .limit-rows > label { text-align: right; }
.dot { align-self: start; font-size: 10px; }
.limit-rows { row-gap: 7px; margin-top: 1px; padding-bottom: 8px; }
.limit-rows .check {
  grid-column: 2;
  display: flex;
  gap: 4px;
  padding-top: 4px;
  text-align: left;
  font-size: 17px;
  line-height: 16px;
}
.limit-rows > .check:first-child { margin-bottom: 15px; }
.check input {
  appearance: none;
  flex: none;
  width: 16px;
  height: 16px;
  margin: 0;
  border: 1px solid #b5b5b5;
  border-radius: 4px;
  background: #e4e4e4;
}
.check input:checked::before {
  content: "";
  display: block;
  width: 5px;
  height: 8px;
  margin: 1px 0 0 5px;
  border: solid #333;
  border-width: 0 3px 3px 0;
  transform: rotate(40deg);
}
.thresholds {
  display: grid;
  grid-template-columns: repeat(4, 1fr);
  gap: 11px;
  padding: 9px 11px 11px;
}
.thresholds .field { display: block; margin-top: 8px; border-color: #ddd; color: #999; font-weight: 400; }
.mark {
  position: absolute;
  left: 3px;
  border: 4px solid #9e1f23;
  pointer-events: none;
}
.mark b {
  position: absolute;
  right: 100%;
  top: 50%;
  margin: -14px 32px 0 0;
  color: #b72025;
  font-size: 26px;
  line-height: 28px;
}
.mark-1 { top: 34px; width: 610px; height: 64px; }
.mark-2 { top: 110px; width: 607px; height: 224px; }
.mark-3 { top: 337px; width: 608px; height: 219px; }
.mark-1 b { margin-right: 28px; }
.mark-2 b { top: 90px; }
.form-actions {
  grid-column: 2;
  display: flex;
  align-items: center;
  gap: 10px;
  padding-top: 15px;
  border-top: 1px solid #e5e5e5;
}
.trash { margin: 0 auto 0 16px; padding: 0; border: 0; background: none; }
.trash svg { width: 17px; height: 22px; }
```
